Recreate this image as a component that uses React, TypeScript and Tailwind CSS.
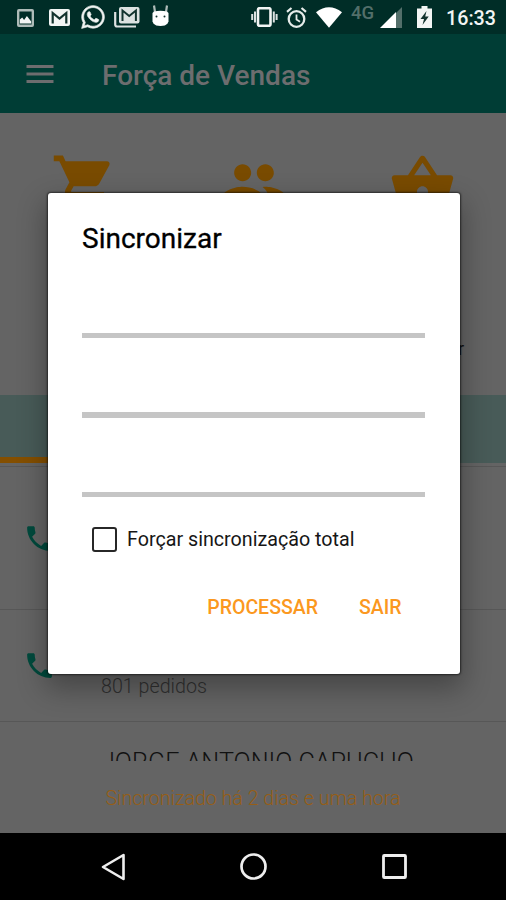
import { MdMenu, MdPeople, MdPhone, MdShoppingBasket, MdShoppingCart } from "react-icons/md";
import { FaWhatsapp } from "react-icons/fa";

function StatusBar() {
  return (
    <div className="flex h-[34px] shrink-0 items-center bg-[#002d27] text-[#f2f5f4]">
      <svg className="ml-[17px] mt-[1px]" width="17" height="18" viewBox="0 0 18 18" preserveAspectRatio="none">
        <path fill="#aebbb8" fillRule="evenodd" d="M2 0h14a2 2 0 0 1 2 2v14a2 2 0 0 1-2 2H2a2 2 0 0 1-2-2V2a2 2 0 0 1 2-2Zm0.500 2.500v13h13v-13Z" />
        <path fill="#f2f5f4" d="M3 14.500v-4l2.500-2 2 2.500 3-4 4.500 5.500v2Z" />
      </svg>
      <svg className="ml-[15px]" width="21" height="17" viewBox="0 0 21 17">
        <rect width="21" height="17" rx="2" fill="#f2f5f4" />
        <path d="M3.700 14.500V4l6.800 5.500L17.300 4v10.500" fill="none" stroke="#12332e" strokeWidth="2.200" />
      </svg>
      <FaWhatsapp className="ml-[10px]" size={26} stroke="#e5ebe9" strokeWidth={14} />
      <svg className="ml-[8px]" width="26" height="21" viewBox="0 0 26 21">
        <path d="M1.200 5v12.500a2 2 0 0 0 2 2H22" fill="none" stroke="#dce2e1" strokeWidth="2.200" />
        <rect x="5" width="20.500" height="16.500" rx="2" fill="#dce2e1" />
        <path d="M8.500 14V3.500l6.700 5.500 6.700-5.500V14" fill="none" stroke="#12332e" strokeWidth="2" />
      </svg>
      <svg className="ml-[11px] -mt-[3px]" width="19" height="21" viewBox="0 0 19 21">
        <path d="M3 0.500l1 6.500M16 0.500l-1 6.500" stroke="#aebbb8" strokeWidth="2.200" />
        <path fill="#fff" d="M3 6.500q6.500-1.500 13 0l1.500 1.500v8.500l-1 2q-2 2.500-7 2.500t-7-2.500l-1-2V8Z" />
        <circle cx="5.500" cy="11.500" r="1" fill="#12332e" />
        <circle cx="13.500" cy="11.500" r="1" fill="#12332e" />
      </svg>
      <svg className="ml-[81px]" width="27" height="20" viewBox="0 0 27 20">
        <rect x="7" y="1.200" width="12.500" height="17.600" rx="1.500" fill="none" stroke="#f2f5f4" strokeWidth="2.600" />
        <path d="M4 4.500v11M22.800 4.500v11" stroke="#dce2e1" strokeWidth="2" />
        <path d="M1.200 7v6M25.600 7v6" stroke="#dce2e1" strokeWidth="2" />
      </svg>
      <svg className="ml-[8px]" width="21" height="21" viewBox="0 0 21 21" fill="none" stroke="#e5ebe9">
        <circle cx="10.500" cy="12" r="7.800" strokeWidth="2.300" />
        <path d="M10.500 7.500v5l3.500 2.200" strokeWidth="1.800" />
        <path d="M1 4.800 5.500 1M20 4.800 15.500 1" strokeWidth="2.200" />
      </svg>
      <svg className="ml-[9px]" width="26" height="21" viewBox="0 0 26 21">
        <path fill="#fff" d="M0 5.200Q13-4.500 26 5.200L13 20.700Z" />
      </svg>
      <span className="-mt-[8px] ml-[9px] w-[25px] text-[18.500px] font-medium leading-none text-[#536f6a]">4G</span>
      <svg className="ml-[4px] mt-[1px]" width="22" height="21" viewBox="0 0 22 21">
        <path fill="#536f6a" d="M22 0v21H16V6Z" />
        <path fill="#fff" d="M0 21 16 5v16Z" />
      </svg>
      <svg className="ml-[15px]" width="15" height="22" viewBox="0 0 15 22">
        <path fill="#f2f5f4" d="M4.500 0h6v2.500H15V22H0V2.500h4.500Z" />
        <path fill="#12332e" d="M9.500 5 3.500 13h3.500l-1.500 6 6.200-8.500H8.200Z" />
      </svg>
      <span className="ml-[14px] mt-[3px] whitespace-nowrap text-[19.700px] font-medium leading-none">16:33</span>
    </div>
  );
}

function AppBar() {
  return (
    <header className="flex h-[79px] shrink-0 items-center bg-[#003d35] text-[#6d6d6f]">
      <MdMenu className="ml-[22px]" size={36} />
      <h1 className="ml-[44px] mt-[4px] whitespace-nowrap text-[28px] font-medium leading-none">Força de Vendas</h1>
    </header>
  );
}

function Shortcuts() {
  return (
    <section className="h-[282px] shrink-0 pt-[37px] text-[#794b00]">
      <div className="grid grid-cols-3 justify-items-center">
        <MdShoppingCart size={67} />
        <MdPeople className="ml-[2px]" size={68} />
        <MdShoppingBasket className="ml-[2px]" size={67} />
      </div>
      <p className="mr-[42px] mt-[119px] text-right text-[18px] leading-[24px] text-[#111]">r</p>
    </section>
  );
}

function Contacts() {
  return (
    <section className="flex h-[295px] shrink-0 flex-col overflow-hidden border-t border-[#575757]">
      <div className="flex h-[143px] shrink-0 items-center border-b border-[#575757] pl-[23px]">
        <MdPhone size={33} className="text-[#004a3d]" />
      </div>
      <div className="flex h-[112px] shrink-0 border-b border-[#575757] pl-[23px]">
        <MdPhone size={33} className="mt-[39px] text-[#004a3d]" />
        <p className="ml-[45px] mt-[65px] whitespace-nowrap text-[19.700px] font-light leading-[24px] text-[#303030]">801 pedidos</p>
      </div>
      <p className="ml-[101px] mt-[26px] whitespace-nowrap text-[25.200px] font-light leading-[30px] text-[#111]">JORGE ANTONIO CAPUCHO</p>
    </section>
  );
}

function SystemNav() {
  return (
    <nav className="flex h-[67px] shrink-0 items-center bg-black">
      <svg className="ml-[101px]" width="25" height="28" viewBox="0 0 25 28" fill="none" stroke="#eee" strokeWidth="2.600">
        <path strokeLinejoin="round" d="M2 14 22.500 2v24Z" />
      </svg>
      <svg className="ml-[113px]" width="29" height="29" viewBox="0 0 29 29" fill="none" stroke="#eee" strokeWidth="2.700">
        <circle cx="14.500" cy="14.500" r="12" />
      </svg>
      <svg className="ml-[114px]" width="25" height="25" viewBox="0 0 25 25" fill="none" stroke="#eee" strokeWidth="2.800">
        <rect x="1.500" y="1.500" width="22" height="22" rx="0.800" />
      </svg>
    </nav>
  );
}

function SyncDialog() {
  return (
    <div
      role="dialog"
      className="absolute left-[48px] top-[193px] flex h-[480.500px] w-[411.500px] flex-col rounded-[3px] bg-white px-[34px] shadow-[0_0_2px_1px_rgba(0,0,0,0.55),0_12px_28px_3px_rgba(0,0,0,0.3)]"
    >
      <h2 className="mt-[29px] whitespace-nowrap text-[28px] leading-[34px] text-black [-webkit-text-stroke:0.3px_#000]">Sincronizar</h2>
      <div className="mt-[76.500px] flex w-[343px] flex-col gap-[74px]">
        <div className="h-[5.500px] bg-[#c5c5c5]" />
        <div className="h-[5.500px] bg-[#c5c5c5]" />
        <div className="h-[5.500px] bg-[#c5c5c5]" />
      </div>
      <label className="mt-[29px] flex h-[27px] items-center">
        <span className="ml-[10px] size-[25px] rounded-[3px] border-2 border-[#272727]" />
        <span className="ml-[10px] mt-[1px] whitespace-nowrap text-[19.700px] leading-[26px] text-[#161616]">Forçar sincronização total</span>
      </label>
      <div className="mr-[24px] mt-[42px] flex justify-end gap-[41px] text-[19.500px] leading-[26px] text-[#fb9820]">
        <button className="font-medium">PROCESSAR</button>
        <button className="font-medium">SAIR</button>
      </div>
    </div>
  );
}

export default function App() {
  return (
    <div className="relative flex h-[900px] w-[506px] flex-col overflow-hidden bg-[#646464] font-[Roboto,sans-serif]">
      <StatusBar />
      <AppBar />
      <Shortcuts />
      <div className="flex h-[68px] shrink-0 items-end bg-[#485b58]">
        <div className="h-[6px] w-[168px] bg-[#844f00]" />
      </div>
      <div className="h-[3px] shrink-0" />
      <Contacts />
      <footer className="flex h-[72px] shrink-0 items-center justify-center whitespace-nowrap pt-[3px] text-[19.600px] font-light text-[#965e16]">
        Sincronizado há 2 dias e uma hora
      </footer>
      <SystemNav />
      <SyncDialog />
    </div>
  );
}
